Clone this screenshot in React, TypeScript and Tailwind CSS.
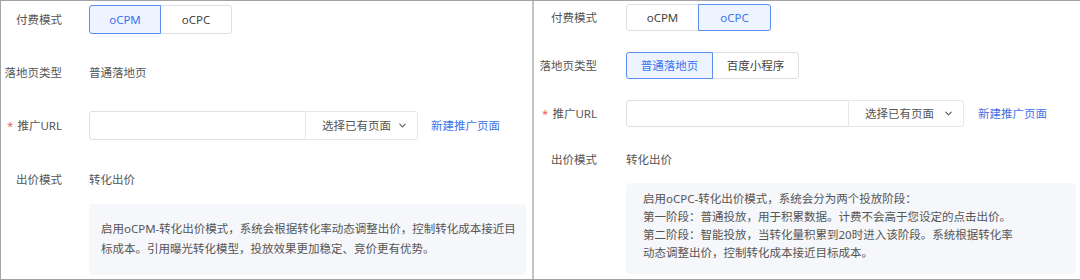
import React from 'react';
import { ChevronDown } from 'lucide-react';

interface SegProps {
    options: string[];
    active: number;
    width: string;
    height: string;
}

const Segmented: React.FC<SegProps> = ({ options, active, width, height }) => (
    <div className="flex">
        {options.map((opt, i) => {
            const on = i === active;
            return (
                <div
                    key={opt}
                    className={`${width} ${height} flex items-center justify-center border ${
                        on ? 'bg-[#edf3ff] border-[#5b8ff0] text-[#3a74ee] z-10' : 'bg-white border-[#dcdfe6] text-[#444]'
                    } ${i === 0 ? 'rounded-l-[3px]' : 'rounded-r-[3px] -ml-px'}`}
                >
                    {opt}
                </div>
            );
        })}
    </div>
);

const UrlRow: React.FC<{ inputW: string; selectW: string; height: string; linkGap: string }> = ({ inputW, selectW, height, linkGap }) => (
    <div className="flex items-center">
        <div className={`${inputW} ${height} border border-[#dcdfe6] rounded-l-[3px] bg-white`} />
        <div className={`${selectW} ${height} -ml-px border border-[#e4e7ed] rounded-r-[3px] bg-white flex items-center justify-between pl-4 pr-[9px] text-[#555]`}>
            <span>选择已有页面</span>
            <ChevronDown size={11} strokeWidth={2.2} className="text-[#555]" />
        </div>
        <span className={`${linkGap} text-[#3f72e6]`}>新建推广页面</span>
    </div>
);

export default function App() {
    return (
        <div className="w-[1080px] h-[280px] border-t border-l border-b border-[#a3a3a3] bg-white flex overflow-hidden font-['Noto_Sans','Noto_Sans_CJK_SC',sans-serif] text-[11.5px] text-[#444]">
            {/* left: oCPM */}
            <div className="w-[531px] shrink-0 flex flex-col pt-[4px]">
                <div className="flex items-center h-[29px]">
                    <div className="w-[61px] text-right text-[#555]">付费模式</div>
                    <div className="ml-[27px]">
                        <Segmented options={['oCPM', 'oCPC']} active={0} width="w-[72px]" height="h-[29px]" />
                    </div>
                </div>
                <div className="flex items-center h-[29px] mt-[24px]">
                    <div className="w-[61px] text-right text-[#555]">落地页类型</div>
                    <div className="ml-[27px] text-[#555]">普通落地页</div>
                </div>
                <div className="flex items-center h-[29px] mt-[24px]">
                    <div className="w-[61px] text-right text-[#555]">
                        <span className="text-[#e86a5c] mr-1">*</span>推广URL
                    </div>
                    <div className="ml-[27px]">
                        <UrlRow inputW="w-[217px]" selectW="w-[113px]" height="h-[29px]" linkGap="ml-[13px]" />
                    </div>
                </div>
                <div className="flex items-center h-[29px] mt-[25px]">
                    <div className="w-[61px] text-right text-[#555]">出价模式</div>
                    <div className="ml-[27px] text-[#555]">转化出价</div>
                </div>
                <div className="ml-[88px] mr-[6px] mt-[10px] h-[71px] bg-[#f5f7fb] rounded-[4px] pl-[12px] pt-[15px] leading-[20px] text-[#555] whitespace-nowrap">
                    <div>启用oCPM-转化出价模式，系统会根据转化率动态调整出价，控制转化成本接近目</div>
                    <div>标成本。引用曝光转化模型，投放效果更加稳定、竞价更有优势。</div>
                </div>
            </div>

            {/* divider */}
            <div className="w-[2px] shrink-0 bg-[#c4c4c4]" />

            {/* right: oCPC */}
            <div className="flex-1 flex flex-col pt-[3px]">
                <div className="flex items-center h-[27px]">
                    <div className="w-[63px] text-right text-[#555]">付费模式</div>
                    <div className="ml-[29px]">
                        <Segmented options={['oCPM', 'oCPC']} active={1} width="w-[73px]" height="h-[27px]" />
                    </div>
                </div>
                <div className="flex items-center h-[27px] mt-[21px]">
                    <div className="w-[63px] text-right text-[#555]">落地页类型</div>
                    <div className="ml-[29px]">
                        <Segmented options={['普通落地页', '百度小程序']} active={0} width="w-[87px]" height="h-[27px]" />
                    </div>
                </div>
                <div className="flex items-center h-[27px] mt-[21px]">
                    <div className="w-[63px] text-right text-[#555]">
                        <span className="text-[#e86a5c] mr-1">*</span>推广URL
                    </div>
                    <div className="ml-[29px]">
                        <UrlRow inputW="w-[223px]" selectW="w-[116px]" height="h-[27px]" linkGap="ml-[14px]" />
                    </div>
                </div>
                <div className="flex items-center h-[27px] mt-[19px]">
                    <div className="w-[63px] text-right text-[#555]">出价模式</div>
                    <div className="ml-[29px] text-[#555]">转化出价</div>
                </div>
                <div className="ml-[92px] mr-[4px] mt-[10px] h-[91px] bg-[#f5f7fb] rounded-[4px] pl-[17px] pt-[7px] leading-[18px] text-[#555] whitespace-nowrap">
                    <div>启用oCPC-转化出价模式，系统会分为两个投放阶段：</div>
                    <div>第一阶段：普通投放，用于积累数据。计费不会高于您设定的点击出价。</div>
                    <div>第二阶段：智能投放，当转化量积累到20时进入该阶段。系统根据转化率</div>
                    <div>动态调整出价，控制转化成本接近目标成本。</div>
                </div>
            </div>
        </div>
    );
}
